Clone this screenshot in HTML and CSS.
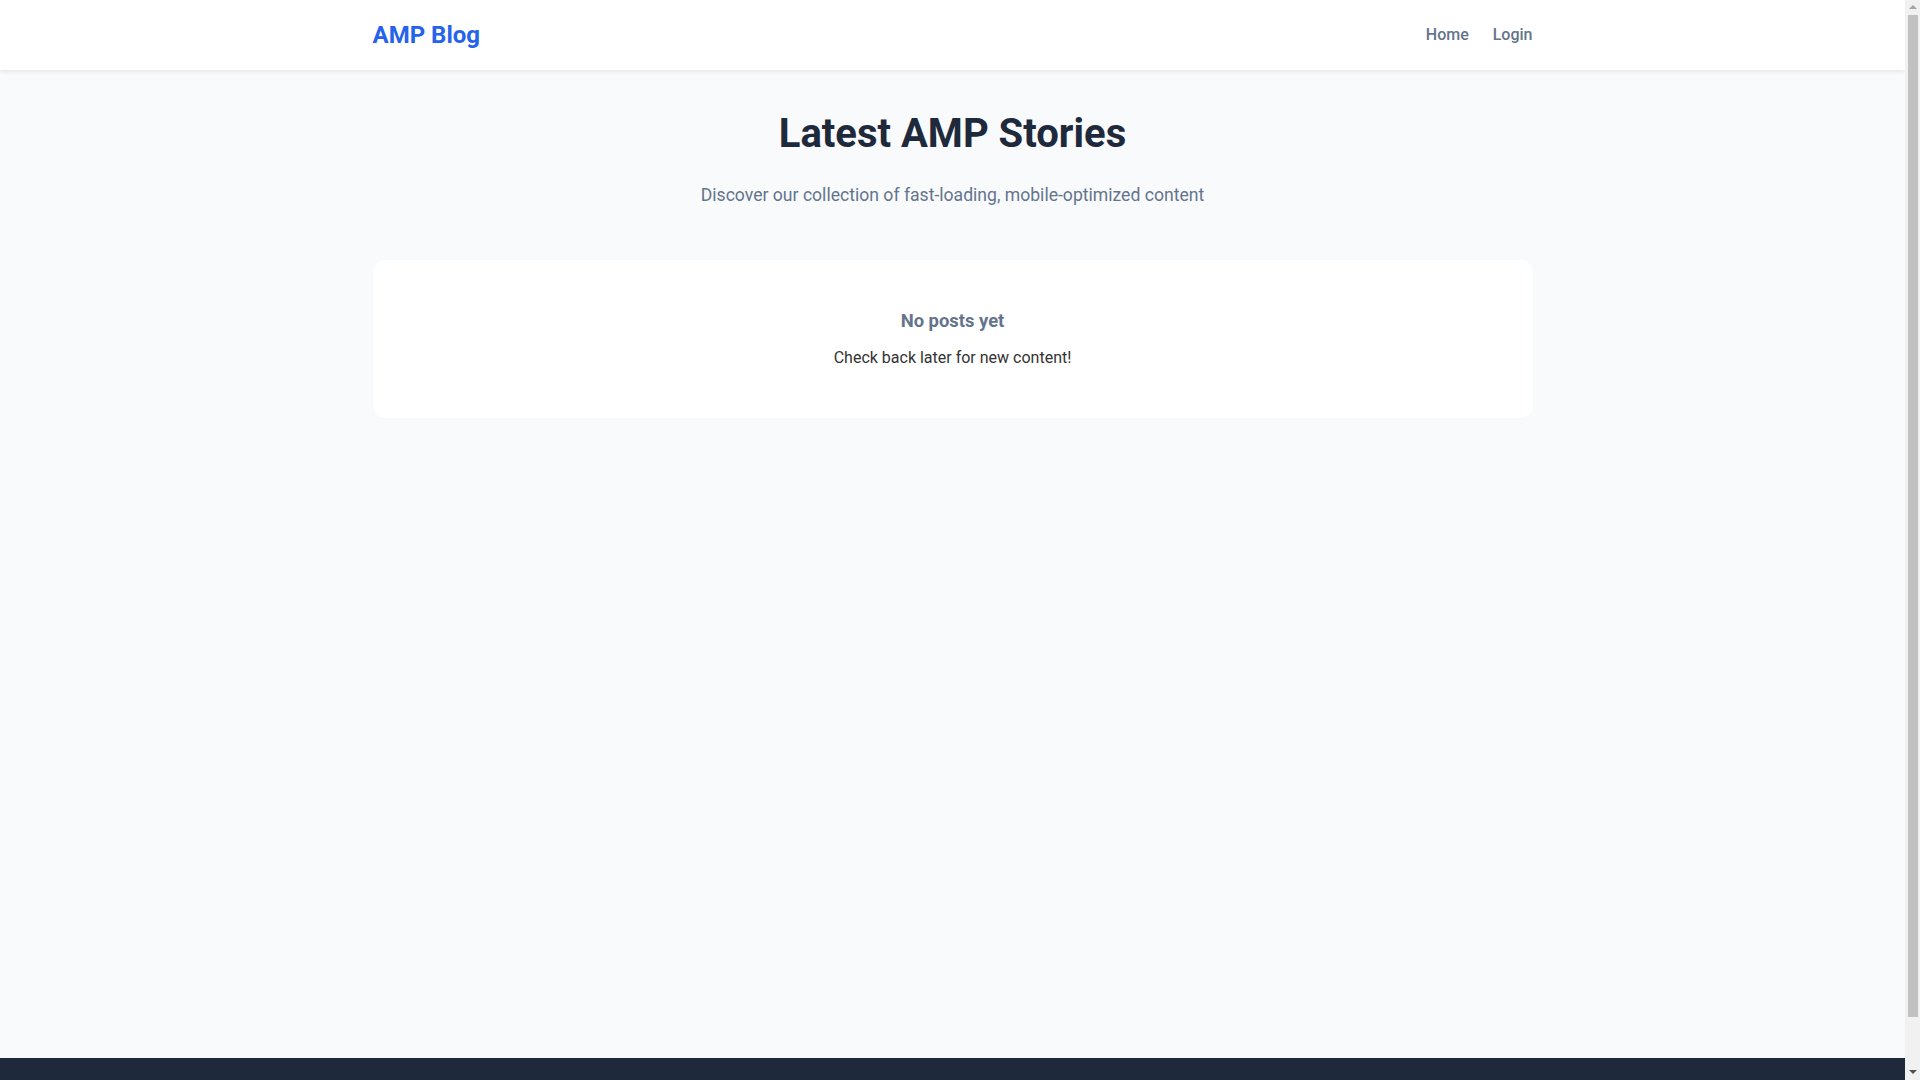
FILE: index.html
```html
<!DOCTYPE html>
<html lang="en">
<head>
    <meta charset="UTF-8">
    <meta name="viewport" content="width=device-width, initial-scale=1.0">
    <title>AMP Blog</title>
    <link rel="stylesheet" href="styles.css">
</head>
<body>
    <header class="site-header">
        <div class="container header-inner">
            <a href="#" class="logo">AMP Blog</a>
            <nav class="nav">
                <a href="#">Home</a>
                <a href="#">Login</a>
            </nav>
        </div>
    </header>

    <main class="container main">
        <section class="hero">
            <h1>Latest AMP Stories</h1>
            <p>Discover our collection of fast-loading, mobile-optimized content</p>
        </section>

        <div class="empty-card">
            <h3>No posts yet</h3>
            <p>Check back later for new content!</p>
        </div>
    </main>

    <footer class="site-footer">
        <p>&copy; 2024 AMP Blog. All rights reserved.</p>
    </footer>

    <!-- window scrollbar, as the browser drew it -->
    <div class="scrollbar" aria-hidden="true">
        <span class="sb-arrow sb-up"></span>
        <span class="sb-thumb"></span>
        <span class="sb-arrow sb-down"></span>
    </div>
</body>
</html>
```

FILE: styles.css
```css
* {
    box-sizing: border-box;
}
body {
    font-family: Roboto, "Liberation Sans", sans-serif;
    margin: 0 15px 0 0;
    padding: 0;
    background-color: #f8fafc;
    color: #333;
    line-height: 1.6;
}
a {
    text-decoration: none;
}
.container {
    max-width: 1200px;
    margin: 0 auto;
    padding: 0 20px;
}
.site-header {
    background: white;
    box-shadow: 0 2px 4px rgba(0, 0, 0, 0.08);
    position: relative;
}
.header-inner {
    height: 70px;
    display: flex;
    align-items: center;
    justify-content: space-between;
}
.logo {
    font-size: 24px;
    font-weight: 700;
    color: #2563eb;
}
.nav {
    display: flex;
    gap: 24px;
}
.nav a {
    color: #64748b;
    font-size: 16px;
    font-weight: 500;
}
.main {
    min-height: calc(100vh - 92px);
    padding-top: 40px;
}
.hero {
    text-align: center;
    margin-bottom: 51px;
}
.hero h1 {
    font-size: 40px;
    line-height: 1.2;
    font-weight: 700;
    color: #1e293b;
    margin: 0 0 23px;
}
.hero p {
    font-size: 17.6px;
    color: #64748b;
    margin: 0;
}
.empty-card {
    background: white;
    border-radius: 12px;
    padding: 47px 20px 48px;
    text-align: center;
    box-shadow: 0 1px 3px rgba(0, 0, 0, 0.02);
}
.empty-card h3 {
    font-size: 18.4px;
    line-height: 1.5;
    color: #64748b;
    margin: 0 0 10px;
}
.empty-card p {
    font-size: 16px;
    line-height: 1.6;
    margin: 0;
}
.site-footer {
    background-color: #1e293b;
    color: #cbd5e1;
    text-align: center;
    padding: 24px;
}
.site-footer p {
    margin: 0;
}

.scrollbar {
    position: fixed;
    top: 0;
    right: 0;
    width: 15px;
    height: 100vh;
    background: #f1f1f1;
    display: flex;
    flex-direction: column;
    align-items: center;
}
.sb-arrow {
    width: 0;
    height: 0;
    border-left: 4px solid transparent;
    border-right: 4px solid transparent;
    margin: 5px 0;
}
.sb-up {
    border-bottom: 4px solid #a3a3a3;
}
.sb-down {
    border-top: 4px solid #505050;
    margin-top: auto;
    margin-bottom: 6px;
}
.sb-thumb {
    width: 10px;
    height: 1002px;
    margin-top: 1px;
    background: #c1c1c1;
}
```
